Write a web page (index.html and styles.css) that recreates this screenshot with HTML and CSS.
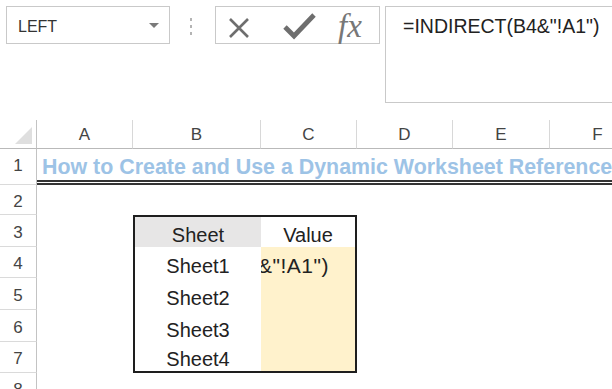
FILE: index.html
```html
<!DOCTYPE html>
<html lang="en">

<head>
    <meta charset="UTF-8">
    <meta name="viewport" content="width=device-width, initial-scale=1.0">
    <title>INDIRECT worksheet reference</title>
    <link rel="stylesheet" href="styles.css">
</head>

<body>
    <div class="formula-bar">
        <div class="name-box">
            <span>LEFT</span>
            <svg class="drop" width="10" height="5" viewBox="0 0 10 5"><path d="M0 0 L10 0 L5 5 Z" /></svg>
        </div>
        <div class="grip"><i></i><i></i><i></i></div>
        <div class="fx-box">
            <svg class="icon-cancel" width="20" height="20" viewBox="0 0 20 20">
                <path d="M1 1 L19 19 M19 1 L1 19" />
            </svg>
            <svg class="icon-enter" width="33" height="28" viewBox="0 0 33 28">
                <path d="M2 15 L11 24 L31 3" />
            </svg>
            <span class="fx">fx</span>
        </div>
        <div class="formula-input">=INDIRECT(B4&amp;"!A1")</div>
    </div>

    <div class="sheet">
        <div class="corner">
            <svg width="17" height="17" viewBox="0 0 17 17"><path d="M17 0 L17 17 L0 17 Z" /></svg>
        </div>
        <div class="col-head">A</div>
        <div class="col-head">B</div>
        <div class="col-head">C</div>
        <div class="col-head">D</div>
        <div class="col-head">E</div>
        <div class="col-head">F</div>

        <div class="row-head r1">1</div>
        <div class="title-cell">How to Create and Use a Dynamic Worksheet Reference</div>
        <div class="row-head r2">2</div>
        <div class="row-head r3">3</div>
        <div class="row-head r4">4</div>
        <div class="row-head r5">5</div>
        <div class="row-head r6">6</div>
        <div class="row-head r7">7</div>
        <div class="row-head r8">8</div>

        <div class="lookup">
            <div class="cell head-sheet">Sheet</div>
            <div class="cell">Value</div>
            <div class="cell">Sheet1</div>
            <!-- cell in edit mode, scrolled to the end of the formula -->
            <div class="cell value editing"><span>&amp;"!A1")</span></div>
            <div class="cell">Sheet2</div>
            <div class="cell value"></div>
            <div class="cell">Sheet3</div>
            <div class="cell value"></div>
            <div class="cell">Sheet4</div>
            <div class="cell value"></div>
        </div>
    </div>
</body>

</html>
```

FILE: styles.css
```css
* {
    margin: 0;
    padding: 0;
    box-sizing: border-box;
}

html,
body {
    height: 100%;
    overflow: hidden;
}

body {
    font-family: 'Liberation Sans', Arial, sans-serif;
    background: #fff;
    color: #222;
}

/* formula bar */
.formula-bar {
    display: flex;
    align-items: flex-start;
    height: 120px;
    padding: 6px 0 0 6px;
    overflow: hidden;
}

.name-box {
    flex-shrink: 0;
    width: 164px;
    height: 38px;
    border: 1px solid #c9c9c9;
    display: flex;
    align-items: center;
    justify-content: space-between;
    padding: 5px 10px 0 11px;
    font-size: 16px;
    line-height: 1.15;
    color: #333;
}

.drop {
    fill: #7a7a7a;
    margin-top: -4px;
}

.grip {
    flex-shrink: 0;
    width: 45px;
    display: flex;
    flex-direction: column;
    align-items: center;
    gap: 4px;
    padding: 12px 3px 0 0;
}

.grip i {
    display: block;
    width: 2px;
    height: 3px;
    background: #b4b4b4;
}

.fx-box {
    flex-shrink: 0;
    width: 165px;
    height: 38px;
    border: 1px solid #c9c9c9;
    display: flex;
    align-items: center;
}

.icon-cancel {
    margin: 6px 0 0 13px;
    fill: none;
    stroke: #6e6e6e;
    stroke-width: 2.6;
}

.icon-enter {
    margin: 2px 0 0 34px;
    fill: none;
    stroke: #6e6e6e;
    stroke-width: 4.8;
}

.fx {
    margin: 2px 0 0 22px;
    font-family: 'Liberation Serif', 'Times New Roman', serif;
    font-style: italic;
    font-size: 33px;
    color: #777;
}

.formula-input {
    flex-shrink: 0;
    width: 240px;
    height: 97px;
    margin-left: 5px;
    border: 1px solid #c9c9c9;
    padding: 8px 0 0 17px;
    font-size: 19.5px;
    line-height: 1.15;
    white-space: nowrap;
}

/* worksheet grid */
.sheet {
    display: grid;
    grid-template-columns: 37px 96px 128px 96px 96px 97px 96px;
    grid-template-rows: 29px 36px 30px 32px 31px 32px 32px 31px 31px;
    overflow: hidden;
    color: #444;
}

.corner {
    border-right: 1px solid #c3c3c3;
    border-bottom: 1px solid #b9b9b9;
    display: flex;
    align-items: flex-end;
    justify-content: flex-end;
    padding: 0 4px 4px 0;
}

.corner svg {
    fill: #dfdfdf;
}

.col-head {
    display: flex;
    align-items: center;
    justify-content: center;
    padding-top: 2px;
    font-size: 17px;
    line-height: 1.15;
    border-right: 1px solid #d8d8d8;
    border-bottom: 1px solid #b9b9b9;
}

.row-head {
    grid-column: 1;
    display: flex;
    align-items: center;
    justify-content: center;
    padding-top: 4px;
    font-size: 17px;
    line-height: 1.15;
    border-right: 1px solid #c3c3c3;
    border-bottom: 1px solid #dadada;
}

.row-head.r1 {
    padding-top: 0;
    padding-bottom: 2px;
}

.r1 { grid-row: 2; }
.r2 { grid-row: 3; }
.r3 { grid-row: 4; }
.r4 { grid-row: 5; }
.r5 { grid-row: 6; }
.r6 { grid-row: 7; }
.r7 { grid-row: 8; }
.r8 { grid-row: 9; }

.title-cell {
    grid-row: 2;
    grid-column: 2 / -1;
    display: flex;
    align-items: flex-end;
    padding-left: 5px;
    border-bottom: 5px double #333;
    font-size: 21.4px;
    font-weight: 700;
    line-height: 1.15;
    color: #9dc3e6;
    white-space: nowrap;
    overflow: hidden;
}

/* the little lookup table */
.lookup {
    grid-row: 4 / 9;
    grid-column: 3 / 5;
    display: grid;
    grid-template-columns: 126px 1fr;
    grid-template-rows: 30px 31px 32px 32px 29px;
    border: 2px solid #1e1e1e;
    color: #222;
}

.cell {
    display: flex;
    align-items: flex-end;
    justify-content: center;
    font-size: 20px;
    line-height: 1.15;
    white-space: nowrap;
    overflow: hidden;
}

.head-sheet {
    background: #e7e6e6;
}

.value {
    background: #fff2cc;
}

.value.editing {
    justify-content: flex-start;
    font-size: 21px;
    letter-spacing: 0.5px;
}

.value.editing span {
    margin-left: -3px;
}
```
